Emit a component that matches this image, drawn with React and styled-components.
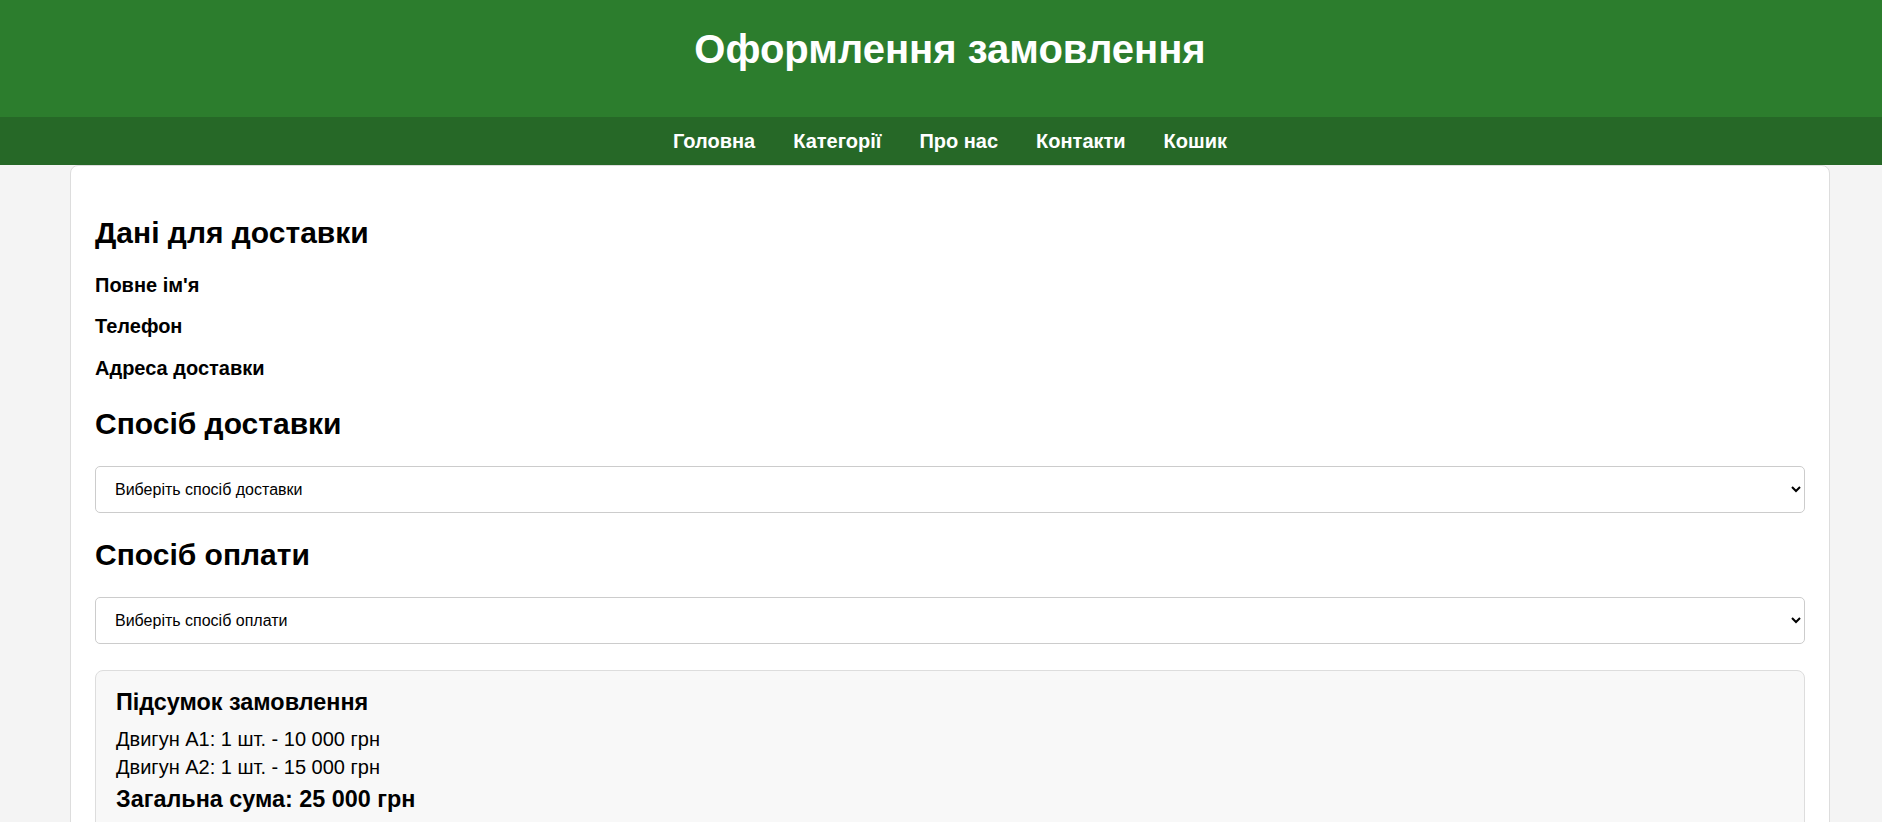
import React from "react";
import styled, { createGlobalStyle } from "styled-components";

const GlobalStyle = createGlobalStyle`
  html, body { margin: 0; padding: 0; }
  body {
    background: #f4f4f4;
    font-family: "Liberation Sans", Arial, sans-serif;
    font-size: 20px;
    color: #000;
  }
  * { box-sizing: border-box; }
`;

const Header = styled.header`
  background: #2c7d2d;
  color: #fff;
  padding: 26px 0 45px 18px;
  text-align: center;
`;

const Title = styled.h1`
  margin: 0;
  font-size: 40px;
  font-weight: 700;
  line-height: 46px;
`;

const Nav = styled.nav`
  background: #266827;
  height: 48px;
  padding-left: 18px;
  display: flex;
  justify-content: center;
  align-items: center;
  gap: 38px;
`;

const NavLink = styled.a`
  color: #fff;
  font-size: 20px;
  font-weight: 700;
  line-height: 23px;
  text-decoration: none;
  cursor: pointer;
`;

const Main = styled.main`
  display: flex;
  justify-content: center;
  padding-left: 18px;
`;

const Card = styled.section`
  width: 1760px;
  background: #fff;
  border: 1px solid #ddd;
  border-radius: 8px;
  padding: 25px 24px 40px;
  display: flex;
  flex-direction: column;
`;

const SectionTitle = styled.h2`
  margin: ${(p) => p.$top}px 0 0;
  font-size: 30px;
  font-weight: 700;
  line-height: 34.5px;
`;

const Fields = styled.div`
  margin-top: 24px;
  display: flex;
  flex-direction: column;
  gap: 18.3px;
`;

const Label = styled.label`
  display: block;
  font-size: 20px;
  font-weight: 700;
  line-height: 23px;
`;

const Select = styled.select`
  margin-top: 24.5px;
  width: 100%;
  height: 47px;
  padding: 0 15px;
  border: 1px solid #ccc;
  border-radius: 5px;
  background: #fff;
  color: #000;
  font-family: "Liberation Sans", Arial, sans-serif;
  font-size: 16px;
`;

const Summary = styled.div`
  margin-top: 26px;
  background: #f8f8f8;
  border: 1px solid #ddd;
  border-radius: 8px;
  padding: 18px 20px 20px;
`;

const SummaryTitle = styled.h3`
  margin: 0 0 12px;
  font-size: 23.4px;
  font-weight: 700;
  line-height: 27px;
`;

const Item = styled.p`
  margin: 0 0 5px;
  font-size: 20px;
  line-height: 23px;
`;

const Total = styled.p`
  margin: 7px 0 0;
  font-size: 23.4px;
  font-weight: 700;
  line-height: 27px;
`;

export default function App() {
  return (
    <>
      <GlobalStyle />
      <Header>
        <Title>Оформлення замовлення</Title>
      </Header>
      <Nav>
        {["Головна", "Категорії", "Про нас", "Контакти", "Кошик"].map((t) => (
          <NavLink key={t}>{t}</NavLink>
        ))}
      </Nav>
      <Main>
        <Card>
          <SectionTitle $top={24.5}>Дані для доставки</SectionTitle>
          <Fields>
            <Label>Повне ім'я</Label>
            <Label>Телефон</Label>
            <Label>Адреса доставки</Label>
          </Fields>
          <SectionTitle $top={27.5}>Спосіб доставки</SectionTitle>
          <Select defaultValue="">
            <option value="">Виберіть спосіб доставки</option>
            <option value="courier">Кур'єр</option>
            <option value="post">Нова пошта</option>
          </Select>
          <SectionTitle $top={25}>Спосіб оплати</SectionTitle>
          <Select defaultValue="">
            <option value="">Виберіть спосіб оплати</option>
            <option value="card">Картка</option>
            <option value="cash">Готівка</option>
          </Select>
          <Summary>
            <SummaryTitle>Підсумок замовлення</SummaryTitle>
            <Item>Двигун А1: 1 шт. - 10 000 грн</Item>
            <Item>Двигун А2: 1 шт. - 15 000 грн</Item>
            <Total>Загальна сума: 25 000 грн</Total>
          </Summary>
        </Card>
      </Main>
    </>
  );
}
